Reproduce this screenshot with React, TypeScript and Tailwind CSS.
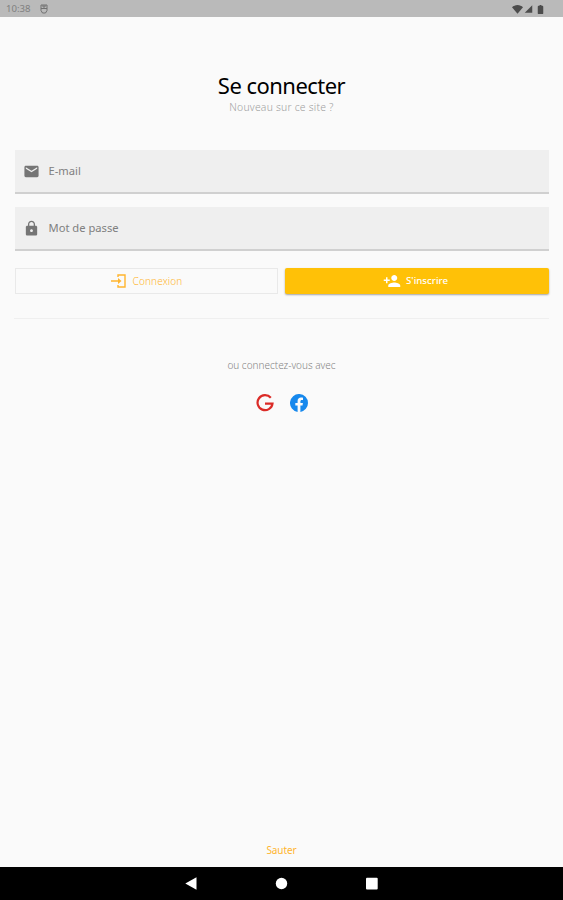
import type { ReactNode } from 'react'

type IconProps = { d: string; className: string }

const icons = {
    mail: 'M20 4H4c-1.1 0-2 .9-2 2v12c0 1.1.9 2 2 2h16c1.1 0 2-.9 2-2V6c0-1.1-.9-2-2-2zm0 4l-8 5-8-5V6l8 5 8-5v2z',
    lock: 'M18 8h-1V6c0-2.76-2.24-5-5-5S7 3.24 7 6v2H6c-1.1 0-2 .9-2 2v10c0 1.1.9 2 2 2h12c1.1 0 2-.9 2-2V10c0-1.1-.9-2-2-2zm-6 9c-1.1 0-2-.9-2-2s.9-2 2-2 2 .9 2 2-.9 2-2 2zm3.1-9H8.9V6c0-1.71 1.39-3.1 3.1-3.1s3.1 1.39 3.1 3.1v2z',
    addUser: 'M15 12c2.21 0 4-1.79 4-4s-1.79-4-4-4-4 1.79-4 4 1.79 4 4 4zm-9-2V7H4v3H1v2h3v3h2v-3h3v-2H6zm9 4c-2.67 0-8 1.34-8 4v2h16v-2c0-2.66-5.33-4-8-4z',
    wifi: 'M12 21L0 7c3-3 7.5-5 12-5s9 2 12 5L12 21z',
    signal: 'M2 22h20V2z',
    battery: 'M16 4h-2V2h-4v2H8a2 2 0 0 0-2 2v14a2 2 0 0 0 2 2h8a2 2 0 0 0 2-2V6a2 2 0 0 0-2-2z',
    facebook: 'M24 12a12 12 0 1 0-13.88 11.85v-8.38H7.08V12h3.04V9.36c0-3 1.8-4.67 4.54-4.67 1.31 0 2.68.24 2.68.24v2.95h-1.51c-1.49 0-1.95.92-1.95 1.87V12h3.32l-.53 3.47h-2.79v8.38A12 12 0 0 0 24 12z',
}

function Icon({ d, className }: IconProps) {
    return (
        <svg viewBox="0 0 24 24" fill="currentColor" className={className}>
            <path d={d} />
        </svg>
    )
}

function Field({ icon, label }: { icon: ReactNode; label: string }) {
    return (
        <label className="flex h-[44px] items-center border-b-2 border-[#d0d0d0] bg-[#efefef] pl-2">
            {icon}
            <span className="ml-[8.5px] pb-px text-[11.2px] leading-none text-[#808080]">{label}</span>
        </label>
    )
}

function StatusBar() {
    return (
        <div className="flex h-[17px] shrink-0 items-center bg-[#bababa] pl-[6px] pr-[17px] pt-px text-[#4c4c4c]">
            <span className="text-[9.6px] leading-none text-[#808080]">10:38</span>
            <svg viewBox="0 0 8 10" className="ml-[9px] h-[10px] w-2 text-[#707070]" fill="none" stroke="currentColor">
                <path d="M1 1h6v5.5L5.5 9h-3L1 6.5zM1 4.5h6M3 1v2h2V1" strokeWidth="1" />
            </svg>
            <div className="ml-auto flex items-center">
                <Icon d={icons.wifi} className="h-[11px] w-[11px]" />
                <Icon d={icons.signal} className="ml-px h-[10px] w-[9px]" />
                <Icon d={icons.battery} className="ml-[2px] h-[11px] w-[11px]" />
            </div>
        </div>
    )
}

function NavBar() {
    return (
        <div className="h-[33px] shrink-0 bg-black text-white">
            <svg viewBox="0 0 563 33" className="h-full w-full" fill="currentColor">
                <path d="M185.3 16.5L196.5 10.3v12.4z" />
                <circle cx="281.5" cy="16.5" r="5.7" />
                <rect x="366" y="10.7" width="11.7" height="11.7" rx="1" />
            </svg>
        </div>
    )
}

export default function App() {
    return (
        <div className="flex h-screen flex-col overflow-hidden bg-[#fafafa] font-['Noto_Sans',sans-serif]">
            <StatusBar />

            <main className="flex flex-1 flex-col px-[14px]">
                <h1 className="mt-[52px] text-center text-[22px] leading-[32px] tracking-[-0.53px] text-black">Se connecter</h1>
                <p className="text-center text-[10.4px] font-light leading-[12px] tracking-[0.22px] text-[#a0a0a0]">Nouveau sur ce site ?</p>

                <form className="mt-[37px] flex flex-col gap-[13px] pl-px">
                    <Field icon={<Icon d={icons.mail} className="h-[17px] w-[17px] text-[#757575]" />} label="E-mail" />
                    <Field icon={<Icon d={icons.lock} className="h-[17px] w-[17px] text-[#757575]" />} label="Mot de passe" />
                </form>

                <div className="mt-[17px] grid grid-cols-[263px_264px] gap-[7px] pl-px">
                    <button type="button" className="flex h-[26px] items-center justify-center border border-[#e9e9e9] text-[10px] font-light tracking-[0.15px] text-[#ffb52e]">
                        <svg viewBox="0 0 16 16" fill="none" stroke="currentColor" strokeWidth="1.4" className="mr-[6px] h-4 w-4">
                            <path d="M7 4V2h7v12H7v-2M0 8h8" />
                            <path d="M7 5L10.5 8 7 11z" fill="currentColor" stroke="none" />
                        </svg>
                        Connexion
                    </button>
                    <button type="button" className="flex h-[26px] items-center justify-center rounded-[2px] bg-[#ffc107] pr-[3px] text-[9.7px] font-medium text-white shadow-[0_1px_2px_rgba(0,0,0,0.35)]">
                        <Icon d={icons.addUser} className="mr-[5px] h-[18px] w-[18px]" />
                        S'inscrire
                    </button>
                </div>

                <hr className="mt-[24px] border-[#efefef]" />

                <p className="mt-[39px] text-center text-[10px] font-light leading-[14px] text-[#858585]">ou connectez-vous avec</p>

                <div className="mt-[22px] flex justify-center gap-[16px]">
                    <svg viewBox="0 0 18 18" fill="none" stroke="#db2b27" strokeWidth="2.2" className="h-[18px] w-[18px]">
                        <path d="M14.8 3.8A7.5 7.5 0 1 0 16.5 9.6H9" />
                    </svg>
                    <Icon d={icons.facebook} className="h-[18px] w-[18px] text-[#1688ed]" />
                </div>

                <button type="button" className="mx-auto mb-[10px] mt-auto text-[10px] leading-[14px] tracking-[-0.1px] text-[#ffb52e]">Sauter</button>
            </main>

            <NavBar />
        </div>
    )
}
